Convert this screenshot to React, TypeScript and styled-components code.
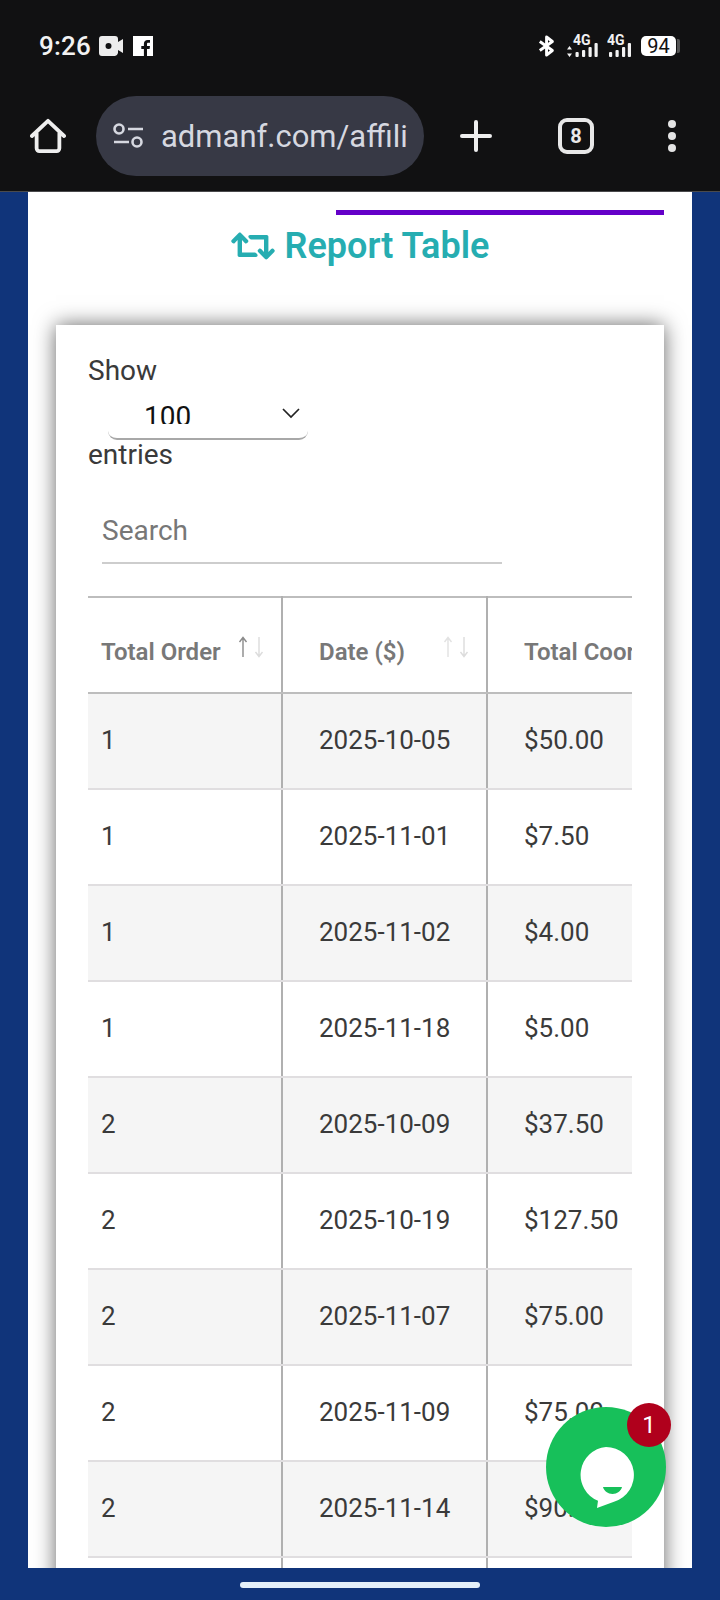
import React from "react";
import styled, { createGlobalStyle } from "styled-components";
import { FaRetweet } from "react-icons/fa";

const GlobalStyle = createGlobalStyle`
  html, body {
    margin: 0;
    padding: 0;
    background: #10347a;
    font-family: Roboto, "Liberation Sans", sans-serif;
  }
  * { box-sizing: border-box; }
`;

const Screen = styled.div`
  position: relative;
  width: 720px;
  height: 1600px;
  overflow: hidden;
  display: flex;
  flex-direction: column;
  background: #10347a;
`;

const Chrome = styled.header`
  flex: none;
  height: 192px;
  background: #111112;
  border-bottom: 1px solid #4a4a4c;
`;

const StatusRow = styled.div`
  height: 92px;
  padding: 0 40px 0 39px;
  display: flex;
  align-items: center;
  color: #f2f2f2;
`;

const Clock = styled.span`
  font-size: 26px;
  font-weight: 500;
  letter-spacing: 0.2px;
  margin-right: 8px;
`;

const StatusRight = styled.div`
  margin-left: auto;
  display: flex;
  align-items: center;
`;

const Battery = styled.div`
  width: 35px;
  height: 20px;
  margin-left: 10px;
  border-radius: 5px;
  background: #fff;
  color: #111;
  font-size: 20px;
  line-height: 20px;
  text-align: center;
`;

const BatteryNub = styled.div`
  width: 3px;
  height: 14px;
  margin-left: 1px;
  border-radius: 0 2px 2px 0;
  background: #555;
`;

const Toolbar = styled.div`
  height: 88px;
  padding-left: 30px;
  display: flex;
  align-items: center;
`;

const ToolSlot = styled.div<{ $left?: number; $width: number }>`
  flex: none;
  width: ${(p) => p.$width}px;
  margin-left: ${(p) => p.$left ?? 0}px;
  display: flex;
  align-items: center;
  justify-content: center;
`;

const AddressPill = styled.div`
  flex: none;
  width: 328px;
  height: 80px;
  margin-left: 30px;
  padding: 0 12px 0 17px;
  border-radius: 40px;
  background: #373945;
  display: flex;
  align-items: center;
  gap: 18px;
`;

const AddressText = styled.div`
  flex: 1;
  min-width: 0;
  white-space: nowrap;
  color: #d6d8e0;
  font-size: 31px;
`;

const TabCount = styled.div`
  width: 36px;
  height: 36px;
  border: 4px solid #e8e8e8;
  border-radius: 9px;
  color: #e8e8e8;
  font-size: 20px;
  font-weight: 700;
  line-height: 28px;
  text-align: center;
`;

const Dots = styled.div`
  display: flex;
  flex-direction: column;
  gap: 4px;
  span {
    width: 8px;
    height: 8px;
    border-radius: 50%;
    background: #e4e4e4;
  }
`;

const Sheet = styled.main`
  flex: 1;
  min-height: 0;
  margin: 0 28px;
  padding-top: 18px;
  background: #fff;
  overflow: hidden;
`;

const PurpleRule = styled.div`
  width: 328px;
  height: 5px;
  margin-left: 308px;
  background: #6400c8;
`;

const Heading = styled.h2`
  margin: 8px 0 0;
  height: 46px;
  display: flex;
  align-items: center;
  justify-content: center;
  gap: 10px;
  color: #26adb1;
  font-size: 36px;
  font-weight: 600;
`;

const Card = styled.section`
  margin: 56px 28px 0;
  padding: 31px 32px 0;
  background: #fff;
  box-shadow: 0 0 20px rgba(0, 0, 0, 0.6);
`;

const FieldText = styled.div`
  color: #3a3a3a;
  font-size: 28px;
  line-height: 30px;
`;

const SelectBox = styled.div`
  position: relative;
  width: 200px;
  height: 44px;
  margin: 10px 0 0 20px;
  border-bottom: 2px solid #a8a8a8;
  border-radius: 0 0 9px 9px;
`;

const SelectValue = styled.div`
  height: 28px;
  padding-left: 36px;
  overflow: hidden;
  color: #111;
  font-size: 28px;
  line-height: 42px;
`;

const SelectChevron = styled.svg`
  position: absolute;
  top: 11px;
  right: 7px;
`;

const SearchBox = styled.div`
  width: 400px;
  height: 63px;
  margin: 31px 0 0 14px;
  border-bottom: 2px solid #cdcdcd;
  color: #777;
  font-size: 28px;
  line-height: 60px;
`;

const TableClip = styled.div`
  width: 544px;
  margin-top: 32px;
  overflow: hidden;
`;

const Table = styled.table`
  width: 620px;
  table-layout: fixed;
  border-collapse: collapse;
  border-top: 2px solid #bdbdbd;
`;

const HeadCell = styled.th<{ $pad: number; $width: number }>`
  width: ${(p) => p.$width}px;
  height: 96px;
  padding: 14px 16px 0 ${(p) => p.$pad}px;
  border-left: ${(p) => (p.$pad > 20 ? "2px solid #b0b0b0" : "none")};
  border-bottom: 2px solid #bdbdbd;
  color: #787878;
  font-size: 24px;
  font-weight: 600;
  text-align: left;
  white-space: nowrap;
`;

const HeadInner = styled.div`
  display: flex;
  align-items: center;
  justify-content: space-between;
`;

const SortArrows = styled.svg`
  flex: none;
  margin-top: -10px;
`;

const Row = styled.tr<{ $striped: boolean }>`
  background: ${(p) => (p.$striped ? "#f5f5f5" : "#fff")};
`;

const Cell = styled.td<{ $pad: number }>`
  height: 96px;
  padding: 0 0 2px ${(p) => p.$pad}px;
  border-left: ${(p) => (p.$pad > 20 ? "2px solid #b0b0b0" : "none")};
  border-bottom: 2px solid #e0dee0;
  color: #3a3a3a;
  font-size: 26px;
  white-space: nowrap;
`;

const BottomBar = styled.footer`
  flex: none;
  height: 32px;
  padding-top: 2px;
  display: flex;
  align-items: center;
  justify-content: center;
`;

const HomeIndicator = styled.div`
  width: 240px;
  height: 6px;
  border-radius: 3px;
  background: #e4f0fa;
`;

const ChatButton = styled.div`
  position: absolute;
  left: 546px;
  top: 1407px;
  width: 120px;
  height: 120px;
  border-radius: 50%;
  background: #17c05a;
  display: flex;
  align-items: center;
  justify-content: center;
`;

const ChatBadge = styled.div`
  position: absolute;
  left: 81px;
  top: -4px;
  width: 44px;
  height: 44px;
  border-radius: 50%;
  background: #b0001c;
  color: #fff;
  font-size: 24px;
  line-height: 44px;
  text-align: center;
`;

const rows = [
  ["1", "2025-10-05", "$50.00"],
  ["1", "2025-11-01", "$7.50"],
  ["1", "2025-11-02", "$4.00"],
  ["1", "2025-11-18", "$5.00"],
  ["2", "2025-10-09", "$37.50"],
  ["2", "2025-10-19", "$127.50"],
  ["2", "2025-11-07", "$75.00"],
  ["2", "2025-11-09", "$75.00"],
  ["2", "2025-11-14", "$90.00"],
  ["", "", ""],
];

const pads = [13, 36, 36];

function Arrows({ upColor }: { upColor: string }) {
  return (
    <SortArrows width="28" height="24" viewBox="0 0 28 24" fill="none" strokeWidth="1.4">
      <path d="M6 22V3M2.500 7 6 2.500 9.500 7" stroke={upColor} />
      <path d="M22 2v19M18.500 17l3.500 4.500 3.500-4.500" stroke="#dcdcdc" />
    </SortArrows>
  );
}

function SignalIcon({ bars, width, textX, updown }: { bars: number[]; width: number; textX: number; updown?: boolean }) {
  const heights = [5, 7, 10, 14];
  return (
    <svg width={width} height="28" viewBox={`0 -2 ${width} 28`} fill="#f2f2f2">
      <text x={textX} y="11" fontSize="14" fontWeight="700" fontFamily="Roboto, sans-serif">
        4G
      </text>
      {updown && <path d="M2.500 12 5 15.500H0ZM2.500 23 0 19.500h5Z" />}
      {bars.map((x, i) => (
        <rect key={x} x={x} y={23 - heights[i]} width="3.200" height={heights[i]} rx="1" />
      ))}
    </svg>
  );
}

export default function App() {
  return (
    <Screen>
      <GlobalStyle />
      <Chrome>
        <StatusRow>
          <Clock>9:26</Clock>
          <svg width="25" height="20" viewBox="0 0 25 20">
            <path
              fill="#ececec"
              fillRule="evenodd"
              d="M3 0h13a3 3 0 0 1 3 3v3l5-3v14l-5-3v3a4 4 0 0 1-3 3H3a3 3 0 0 1-3-3V3a3 3 0 0 1 3-3Zm6.500 7a3 3 0 1 0 0 6 3 3 0 0 0 0-6Z"
            />
          </svg>
          <svg width="20" height="20" viewBox="0 0 20 20" style={{ marginLeft: 9 }}>
            <path
              fill="#fff"
              d="M0 0h20v20h-6v-7h2.600l.4-3h-3V8.200c0-.9.3-1.400 1.500-1.400H17V4.100c-.4 0-1.300-.1-2.300-.1-2.300 0-3.800 1.400-3.800 3.900V10H8.300v3h2.600v7H0Z"
            />
          </svg>
          <StatusRight>
            <svg width="18" height="24" viewBox="0 0 20 24" fill="none" stroke="#fff" strokeWidth="3.200" strokeLinejoin="round">
              <path d="M2 7l14 10-6.500 5V2L16 7 2 17" />
            </svg>
            <span style={{ width: 11 }} />
            <SignalIcon updown width={31} textX={6} bars={[8.5, 15, 21.5, 27.5]} />
            <span style={{ width: 9 }} />
            <SignalIcon width={24} textX={0} bars={[2, 8.5, 15, 20.8]} />
            <Battery>94</Battery>
            <BatteryNub />
          </StatusRight>
        </StatusRow>
        <Toolbar>
          <ToolSlot $width={36}>
            <svg width="38" height="38" viewBox="0 0 38 38" fill="none" stroke="#eeeeee" strokeWidth="4" strokeLinejoin="round" strokeLinecap="round">
              <path d="M2 19 19 3l17 16M7 16v16a3 3 0 0 0 3 3h18a3 3 0 0 0 3-3V16" />
            </svg>
          </ToolSlot>
          <AddressPill>
            <svg width="30" height="26" viewBox="0 0 30 26" fill="none" stroke="#d6d8e0" strokeWidth="2.600">
              <circle cx="6" cy="6" r="4.500" />
              <path d="M15 6h15M1 19h15" />
              <circle cx="24" cy="19" r="4.500" />
            </svg>
            <AddressText>admanf.com/affili</AddressText>
          </AddressPill>
          <ToolSlot $left={36} $width={32}>
            <svg width="32" height="32" viewBox="0 0 32 32" stroke="#eeeeee" strokeWidth="4" strokeLinecap="round">
              <path d="M16 2v28M2 16h28" />
            </svg>
          </ToolSlot>
          <ToolSlot $left={66} $width={36}>
            <TabCount>8</TabCount>
          </ToolSlot>
          <ToolSlot $left={72} $width={12}>
            <Dots>
              <span />
              <span />
              <span />
            </Dots>
          </ToolSlot>
        </Toolbar>
      </Chrome>

      <Sheet>
        <PurpleRule />
        <Heading>
          <FaRetweet size={44} />
          Report Table
        </Heading>
        <Card>
          <FieldText>Show</FieldText>
          <SelectBox>
            <SelectValue>100</SelectValue>
            <SelectChevron width="20" height="12" viewBox="0 0 20 12" fill="none" stroke="#222" strokeWidth="1.700">
              <path d="M2 2l8 8 8-8" />
            </SelectChevron>
          </SelectBox>
          <FieldText>entries</FieldText>
          <SearchBox>Search</SearchBox>
          <TableClip>
            <Table>
              <thead>
                <tr>
                  <HeadCell $pad={13} $width={194}>
                    <HeadInner>
                      Total Order
                      <Arrows upColor="#8a8a8a" />
                    </HeadInner>
                  </HeadCell>
                  <HeadCell $pad={36} $width={205}>
                    <HeadInner>
                      Date ($)
                      <Arrows upColor="#e2e2e2" />
                    </HeadInner>
                  </HeadCell>
                  <HeadCell $pad={36} $width={221}>
                    Total Coordinator
                  </HeadCell>
                </tr>
              </thead>
              <tbody>
                {rows.map((row, i) => (
                  <Row key={i} $striped={i % 2 === 0}>
                    {row.map((value, c) => (
                      <Cell key={c} $pad={pads[c]}>
                        {value}
                      </Cell>
                    ))}
                  </Row>
                ))}
              </tbody>
            </Table>
          </TableClip>
        </Card>
      </Sheet>

      <BottomBar>
        <HomeIndicator />
      </BottomBar>

      <ChatButton>
        <svg width="56" height="62" viewBox="0 0 56 62" style={{ marginTop: 22 }}>
          <path fill="#fff" d="M28 0a28 28 0 0 1 8 54.800L19 61l1-7.200A28 28 0 0 1 28 0Z" />
          <path fill="#17c05a" d="M25 40h19c-1 4-5 7-9.500 7s-8.500-3-9.500-7Z" />
        </svg>
        <ChatBadge>1</ChatBadge>
      </ChatButton>
    </Screen>
  );
}
